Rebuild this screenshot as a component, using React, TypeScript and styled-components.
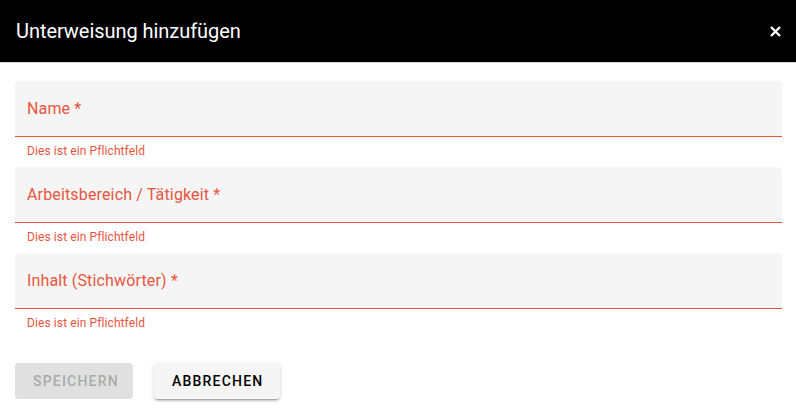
import React from "react";
import styled, { createGlobalStyle } from "styled-components";

const Global = createGlobalStyle`
  html, body { margin: 0; padding: 0; background: #fff; }
  body { font-family: Roboto, "Liberation Sans", Arial, sans-serif; }
  * { box-sizing: border-box; }
`;

const Page = styled.div`
  width: 796px;
  height: 412px;
  background: #fff;
  display: flex;
  flex-direction: column;
`;

const Header = styled.header`
  height: 63px;
  background: #000;
  color: #fff;
  display: flex;
  align-items: center;
  justify-content: space-between;
  padding: 0 13px 0 16px;
  border-bottom: 1px solid #d6d6d6;
`;

const Title = styled.h1`
  margin: 0;
  font-size: 20px;
  font-weight: 400;
  letter-spacing: -0.05px;
`;

const CloseButton = styled.button`
  background: none;
  border: none;
  color: #fff;
  padding: 0;
  width: 16px;
  height: 16px;
  display: flex;
  align-items: center;
  justify-content: center;
  cursor: pointer;
`;

const Form = styled.form`
  display: flex;
  flex-direction: column;
  padding: 18px 14px 0 15px;
`;

const FieldGroup = styled.div`
  display: flex;
  flex-direction: column;
  height: 86px;
`;

const Filled = styled.div`
  height: 56px;
  background: #f5f5f5;
  border-radius: 4px 4px 0 0;
  border-bottom: 1px solid #e8553f;
  display: flex;
  align-items: center;
  padding: 0 12px;
`;

const Label = styled.label`
  font-size: 16px;
  color: #e8553f;
  letter-spacing: 0.15px;
  margin-top: -1px;
`;

const Helper = styled.span`
  font-size: 12px;
  color: #e8553f;
  margin: 6px 12px 0;
  line-height: 16px;
  letter-spacing: 0.1px;
`;

const Actions = styled.div`
  display: flex;
  gap: 21px;
  padding: 24px 15px 0;
`;

const Button = styled.button<{ $disabled?: boolean }>`
  height: 36px;
  padding: 0 17px 0 18px;
  border: none;
  border-radius: 4px;
  font-family: Roboto, "Liberation Sans", Arial, sans-serif;
  font-size: 14px;
  font-weight: 500;
  letter-spacing: 1.2px;
  text-transform: uppercase;
  background: ${(p) => (p.$disabled ? "#e0e0e0" : "#f5f5f5")};
  color: ${(p) => (p.$disabled ? "#ababab" : "#000")};
  box-shadow: ${(p) =>
    p.$disabled
      ? "none"
      : "0 3px 1px -2px rgba(0,0,0,0.2), 0 2px 2px 0 rgba(0,0,0,0.14), 0 1px 5px 0 rgba(0,0,0,0.12)"};
`;

const fields = ["Name *", "Arbeitsbereich / Tätigkeit *", "Inhalt (Stichwörter) *"];

export default function App() {
  return (
    <Page>
      <Global />
      <Header>
        <Title>Unterweisung hinzufügen</Title>
        <CloseButton aria-label="close">
          <svg width="11" height="11" viewBox="0 0 11 11">
            <path d="M1 1 L10 10 M10 1 L1 10" stroke="#fff" strokeWidth="2.4" strokeLinecap="butt" />
          </svg>
        </CloseButton>
      </Header>
      <Form>
        {fields.map((f) => (
          <FieldGroup key={f}>
            <Filled>
              <Label>{f}</Label>
            </Filled>
            <Helper>Dies ist ein Pflichtfeld</Helper>
          </FieldGroup>
        ))}
      </Form>
      <Actions>
        <Button type="button" $disabled style={{ width: 118 }}>Speichern</Button>
        <Button type="button">Abbrechen</Button>
      </Actions>
    </Page>
  );
}
